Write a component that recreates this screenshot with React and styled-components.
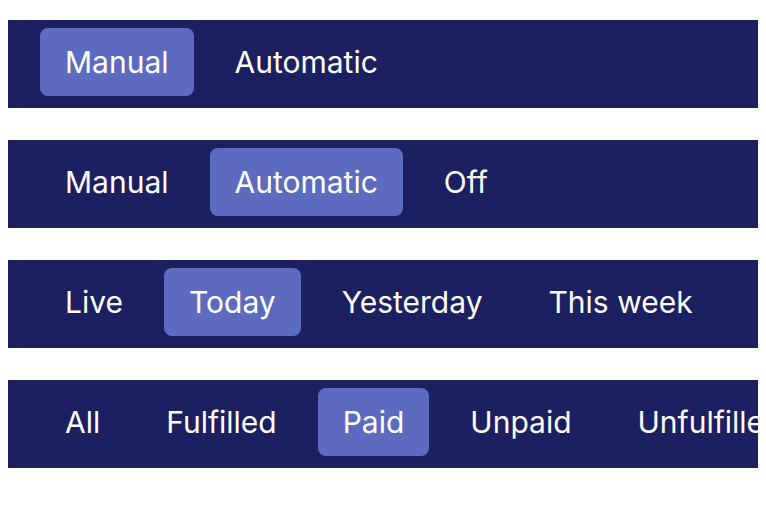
import styled, { createGlobalStyle } from 'styled-components';

const GlobalStyle = createGlobalStyle`
  body {
    margin: 8px;
    background: #ffffff;
    font-family: Inter, "Noto Sans", sans-serif;
  }
`;

const Stack = styled.div`
  display: flex;
  flex-direction: column;
  gap: 32px;
  padding-top: 12px;
`;

const Bar = styled.div`
  display: flex;
  align-items: center;
  gap: 16px;
  height: 88px;
  box-sizing: border-box;
  padding: 8px 0 12px 32px;
  background: #1d2060;
  overflow: hidden;
  white-space: nowrap;
`;

const Tab = styled.button`
  flex: none;
  height: 68px;
  padding: 0 25px;
  border: none;
  border-radius: 8px;
  background: ${(props) => (props.active ? '#5c6bc0' : 'transparent')};
  color: #ffffff;
  font-family: inherit;
  font-size: 30px;
  line-height: 36px;
  cursor: pointer;
`;

const groups = [
  { items: ['Manual', 'Automatic'], active: 0 },
  { items: ['Manual', 'Automatic', 'Off'], active: 1 },
  { items: ['Live', 'Today', 'Yesterday', 'This week'], active: 1 },
  { items: ['All', 'Fulfilled', 'Paid', 'Unpaid', 'Unfulfilled'], active: 2 },
];

const App = () => {
  return (
    <>
      <GlobalStyle />
      <Stack>
        {groups.map((group, i) => (
          <Bar key={i}>
            {group.items.map((label, j) => (
              <Tab key={label} active={j === group.active}>
                {label}
              </Tab>
            ))}
          </Bar>
        ))}
      </Stack>
    </>
  );
};

export default App;
